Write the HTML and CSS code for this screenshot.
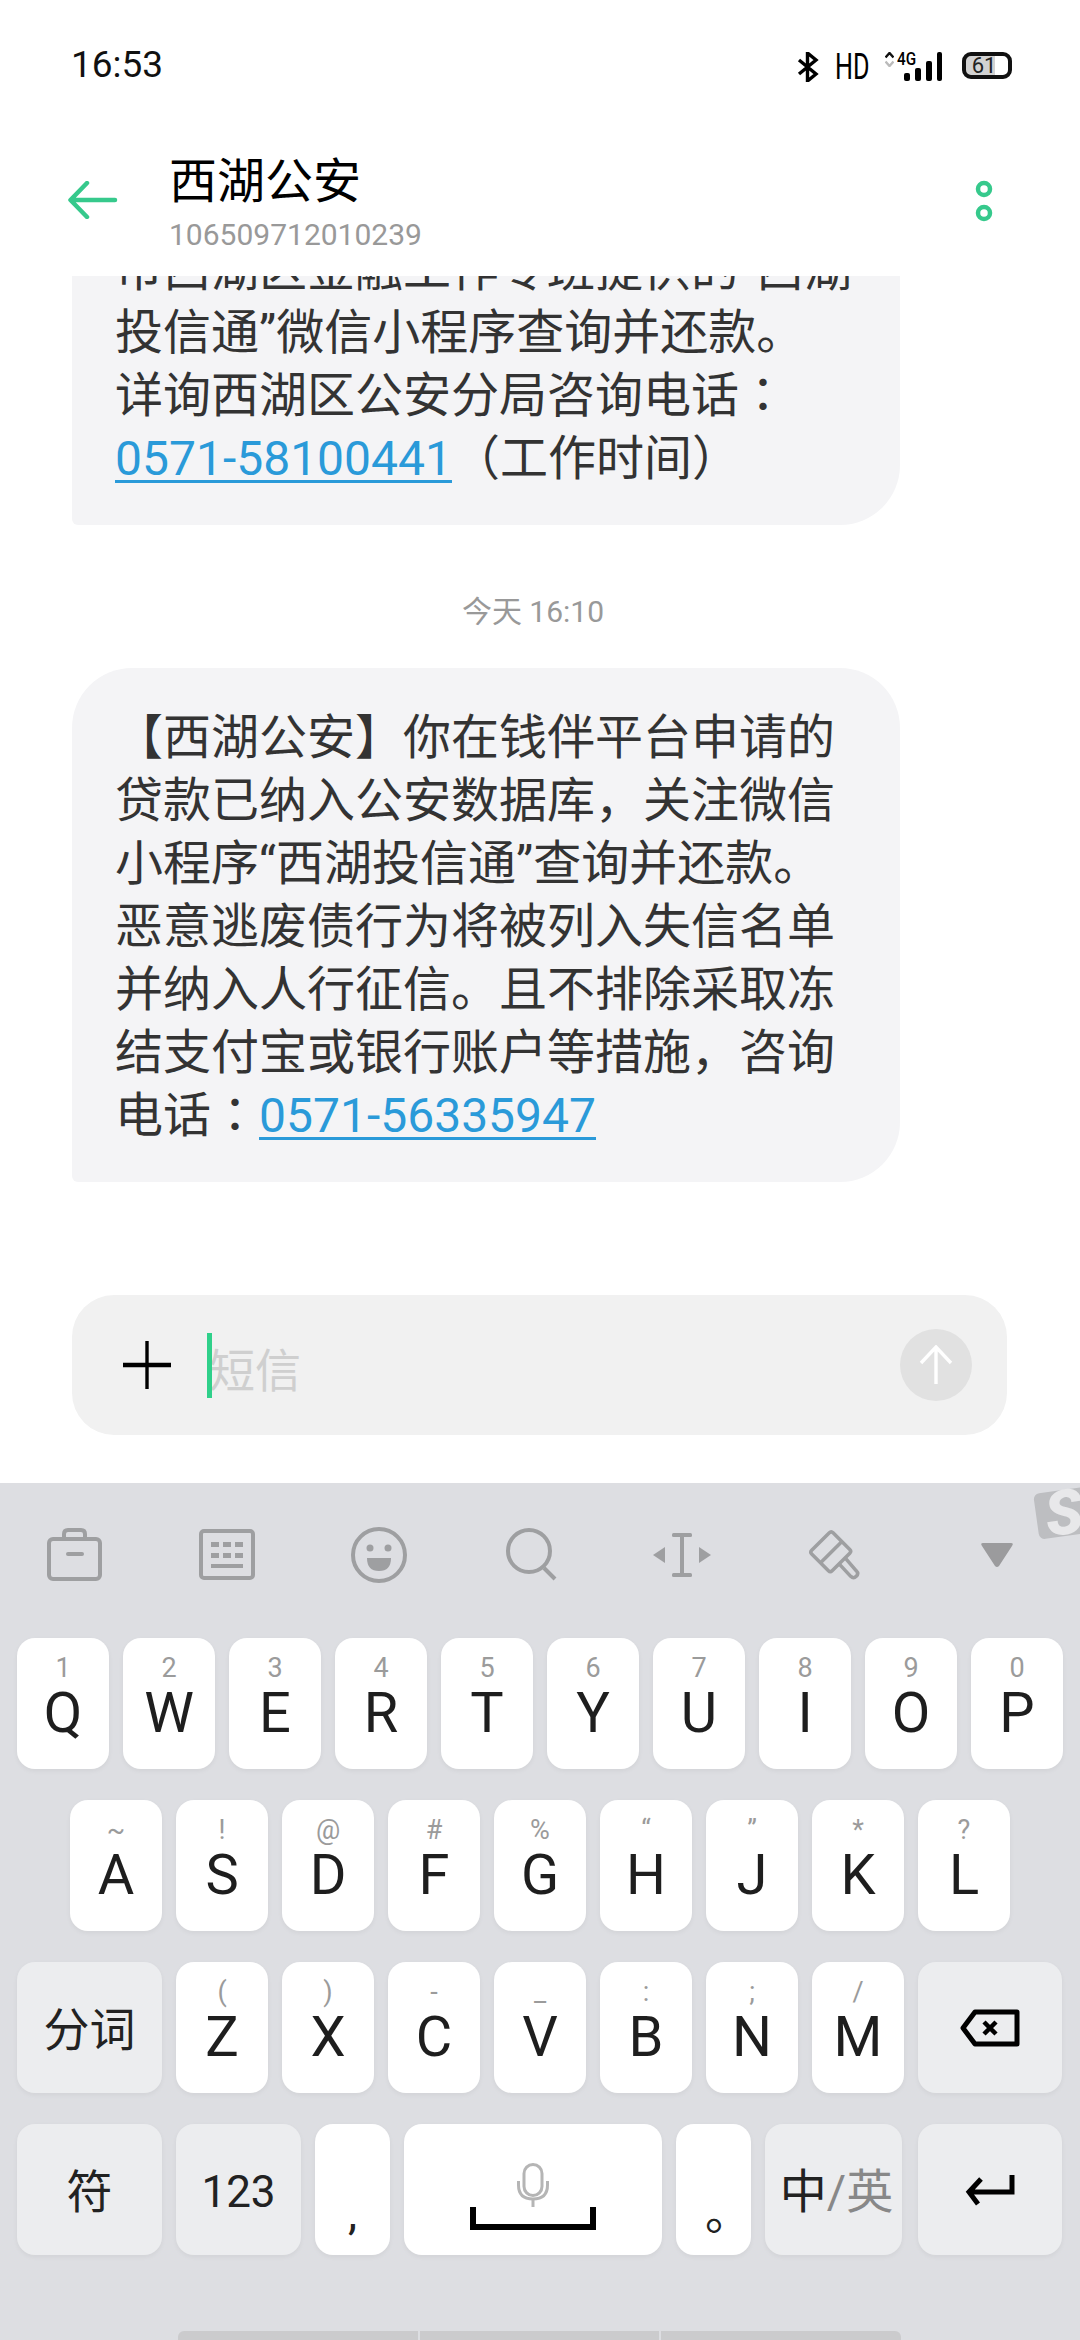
FILE: index.html
```html
<!DOCTYPE html>
<html lang="zh">
<head>
<meta charset="utf-8">
<title>西湖公安</title>
<link rel="stylesheet" href="styles.css">
</head>
<body>
<div class="page">
  <div class="status">
    <span class="time">16:53</span>
    <div class="status-right">
      <svg class="bt" width="22" height="30" viewBox="0 0 22 30"><path d="M2 8 L19 22 L10.500 29 V1 L19 8 L2 22" fill="none" stroke="#000" stroke-width="3.400"/></svg>
      <span class="hd">HD</span>
      <div class="net">
        <svg class="updown" width="9" height="15" viewBox="0 0 9 15"><path d="M0.500 5.500 L4.500 1 L8.500 5.500" fill="none" stroke="#111" stroke-width="2.400"/><path d="M0.500 9.500 L4.500 14 L8.500 9.500" fill="none" stroke="#bbb" stroke-width="2.400"/></svg>
        <span class="fourg">4G</span>
      </div>
      <svg class="signal" width="38" height="29" viewBox="0 0 38 29"><rect x="0" y="21" width="6" height="8" rx="2"/><rect x="11" y="16" width="6" height="13" rx="2"/><rect x="22" y="9" width="6" height="20" rx="2"/><rect x="33" y="0" width="5" height="29" rx="2"/></svg>
      <div class="batt"><span>61</span></div>
    </div>
  </div>

  <header class="head">
    <svg class="back" width="50" height="38" viewBox="0 0 50 38"><path d="M47 19 H4 M19 2 L2.500 19 L19 36" fill="none" stroke="#36c98c" stroke-width="4.500" stroke-linecap="round" stroke-linejoin="round"/></svg>
    <div class="who">
      <div class="name">西湖公安</div>
      <div class="number">106509712010239</div>
    </div>
    <svg class="more" width="18" height="42" viewBox="0 0 18 42"><circle cx="9" cy="9" r="6" fill="none" stroke="#36c98c" stroke-width="4.500"/><circle cx="9" cy="33" r="6" fill="none" stroke="#36c98c" stroke-width="4.500"/></svg>
  </header>

  <main class="thread">
    <div class="bubble bubble-old">市西湖区金融工作专班提供的“西湖<br>投信通”微信小程序查询并还款。<br>详询西湖区公安分局咨询电话<span class="tc" lang="zh-Hant">：</span><br><a class="link">0571-58100441</a>（工作时间）</div>
    <div class="stamp">今天 16:10</div>
    <div class="bubble">【西湖公安】你在钱伴平台申请的<br>贷款已纳入公安数据库，关注微信<br>小程序“西湖投信通”查询并还款。<br>恶意逃废债行为将被列入失信名单<br>并纳入人行征信。且不排除采取冻<br>结支付宝或银行账户等措施，咨询<br>电话<span class="tc" lang="zh-Hant">：</span><a class="link">0571-56335947</a></div>
  </main>

  <div class="composer">
    <svg class="plus" width="48" height="48" viewBox="0 0 48 48"><path d="M24 0 V48" stroke="#000" stroke-width="3.400"/><path d="M0 24 H48" stroke="#000" stroke-width="4.500"/></svg>
    <span class="caret"></span>
    <span class="placeholder">短信</span>
    <div class="send"><svg width="34" height="40" viewBox="0 0 34 40"><path d="M17 39 V3 M2 18 L17 2 L32 18" fill="none" stroke="#fff" stroke-width="3.400"/></svg></div>
  </div>

  <section class="kbd">
    <div class="logo"><span>S</span></div>
    <div class="tools">
      <svg width="56" height="56" viewBox="0 0 56 56"><g fill="none" stroke="#9e9fa1" stroke-width="4"><rect x="2" y="12" width="51" height="40" rx="4"/><path d="M17 12 V7 Q17 3 21 3 H34 Q38 3 38 7 V12"/></g><rect x="19" y="25" width="18" height="4" rx="2" fill="#9e9fa1"/></svg>
      <svg width="56" height="56" viewBox="0 0 56 56"><rect x="2" y="4" width="52" height="47" rx="3" fill="none" stroke="#9e9fa1" stroke-width="4"/><g fill="#9e9fa1"><rect x="12" y="15" width="8" height="5"/><rect x="24" y="15" width="8" height="5"/><rect x="36" y="15" width="8" height="5"/><rect x="12" y="26" width="8" height="5"/><rect x="24" y="26" width="8" height="5"/><rect x="36" y="26" width="8" height="5"/><rect x="12" y="37" width="32" height="4"/></g></svg>
      <svg width="56" height="56" viewBox="0 0 56 56"><circle cx="28" cy="28" r="26" fill="none" stroke="#9e9fa1" stroke-width="4"/><circle cx="19" cy="21" r="3.500" fill="#9e9fa1"/><circle cx="37" cy="21" r="3.500" fill="#9e9fa1"/><path d="M16 31 H40 Q40 44 28 44 Q16 44 16 31 Z" fill="#9e9fa1"/></svg>
      <svg width="56" height="56" viewBox="-2 0 56 56"><circle cx="24" cy="24" r="21" fill="none" stroke="#9e9fa1" stroke-width="4"/><path d="M39 41 L50 52" stroke="#9e9fa1" stroke-width="4"/></svg>
      <svg class="ti-cursor" width="60" height="56" viewBox="0 0 60 56"><g fill="#9e9fa1"><rect x="20" y="6" width="20" height="4" rx="1.500"/><rect x="20" y="46" width="20" height="4" rx="1.500"/><rect x="28" y="8" width="4" height="40"/><path d="M13 20 V36 L1 28 Z"/><path d="M47 20 V36 L59 28 Z"/></g></svg>
      <svg width="52" height="56" viewBox="0 0 56 56"><g fill="none" stroke="#9e9fa1" stroke-width="3.800" stroke-linejoin="round"><path d="M27 4 L45 22 Q47 24 45 26 L26 45 Q24 47 22 45 L4 27 Q2 25 4 23 L23 4 Q25 2 27 4 Z"/><path d="M36 14 L13 37"/><path d="M33 37 L46 51 Q49 54 52 51 Q55 48 52 45 L40 31"/></g></svg>
      <svg class="tri" width="34" height="26" viewBox="0 0 34 26"><path d="M3 1 H31 Q34 1 32 4 L19 24 Q17 26 15 24 L2 4 Q0 1 3 1 Z" fill="#9b9b9d"/></svg>
    </div>

    <div class="row row-top">
      <div class="key"><span class="hint">1</span><span class="ch">Q</span></div>
      <div class="key"><span class="hint">2</span><span class="ch">W</span></div>
      <div class="key"><span class="hint">3</span><span class="ch">E</span></div>
      <div class="key"><span class="hint">4</span><span class="ch">R</span></div>
      <div class="key"><span class="hint">5</span><span class="ch">T</span></div>
      <div class="key"><span class="hint">6</span><span class="ch">Y</span></div>
      <div class="key"><span class="hint">7</span><span class="ch">U</span></div>
      <div class="key"><span class="hint">8</span><span class="ch">I</span></div>
      <div class="key"><span class="hint">9</span><span class="ch">O</span></div>
      <div class="key"><span class="hint">0</span><span class="ch">P</span></div>
    </div>
    <div class="row row-mid">
      <div class="key"><span class="hint">~</span><span class="ch">A</span></div>
      <div class="key"><span class="hint">!</span><span class="ch">S</span></div>
      <div class="key"><span class="hint">@</span><span class="ch">D</span></div>
      <div class="key"><span class="hint">#</span><span class="ch">F</span></div>
      <div class="key"><span class="hint">%</span><span class="ch">G</span></div>
      <div class="key"><span class="hint">“</span><span class="ch">H</span></div>
      <div class="key"><span class="hint">”</span><span class="ch">J</span></div>
      <div class="key"><span class="hint">*</span><span class="ch">K</span></div>
      <div class="key"><span class="hint">?</span><span class="ch">L</span></div>
    </div>
    <div class="row row-low">
      <div class="key fn w145"><span class="word">分词</span></div>
      <div class="key"><span class="hint">(</span><span class="ch">Z</span></div>
      <div class="key"><span class="hint">)</span><span class="ch">X</span></div>
      <div class="key"><span class="hint">-</span><span class="ch">C</span></div>
      <div class="key"><span class="hint">_</span><span class="ch">V</span></div>
      <div class="key"><span class="hint">:</span><span class="ch">B</span></div>
      <div class="key"><span class="hint">;</span><span class="ch">N</span></div>
      <div class="key"><span class="hint">/</span><span class="ch">M</span></div>
      <div class="key fn w144 icon-key">
        <svg width="60" height="38" viewBox="0 0 60 38"><path d="M15 3 H57 V35 H15 L3 19 Z" fill="none" stroke="#000" stroke-width="5" stroke-linejoin="round"/><path d="M24 13 L36 25 M36 13 L24 25" stroke="#000" stroke-width="4.500"/></svg>
      </div>
    </div>
    <div class="row row-low">
      <div class="key fn w145"><span class="word">符</span></div>
      <div class="key fn w125"><span class="word num">123</span></div>
      <div class="key w75 comma"><span>,</span></div>
      <div class="key w258 space">
        <svg width="32" height="44" viewBox="0 0 32 44"><g fill="none" stroke="#b5b5b5" stroke-width="3"><rect x="7" y="1.500" width="18" height="31" rx="9"/><path d="M1.500 18 V22 Q1.500 36 16 36 Q30.500 36 30.500 22 V18"/><path d="M16 36 V44"/></g></svg>
        <svg width="126" height="23" viewBox="0 0 126 23"><path d="M3 0 V20 H123 V0" fill="none" stroke="#000" stroke-width="6"/></svg>
      </div>
      <div class="key w75 stop"><span>。</span></div>
      <div class="key fn w137"><span class="word lang">中<i class="dim">/英</i></span></div>
      <div class="key fn w144 icon-key enter">
        <svg width="50" height="32" viewBox="0 0 50 32"><path d="M47 1 V18 H5 M16 5 L4 18 L13 30" fill="none" stroke="#000" stroke-width="5"/></svg>
      </div>
    </div>
    <div class="homebar"><span></span><span></span><span></span></div>
  </section>
</div>
</body>
</html>
```

FILE: styles.css
```css
* { box-sizing: border-box; }
html, body { margin: 0; padding: 0; background: #fff; }
body { font-family: Roboto, "Noto Sans CJK SC", sans-serif; color: #000; }
.page { width: 1080px; height: 2340px; display: flex; flex-direction: column; overflow: hidden; }

/* status bar */
.status { height: 100px; flex: none; display: flex; justify-content: space-between; align-items: flex-start; padding: 44px 68px 0 71px; }
.time { font-size: 37px; line-height: 42px; color: #111; }
.status-right { display: flex; align-items: flex-start; margin-top: 8px; }
.bt { display: block; }
.hd { font-size: 36px; line-height: 30px; width: 37px; margin-left: 16px; transform: scaleX(.7); transform-origin: left center; color: #000; white-space: nowrap; }
.net { display: flex; align-items: flex-start; margin-left: 13px; width: 36px; gap: 3px; }
.updown { display: block; }
.fourg { font-size: 18px; line-height: 14px; font-weight: 500; transform: scaleX(.85); transform-origin: left center; }
.signal { display: block; margin-left: -17px; fill: #000; }
.batt { width: 50px; height: 27px; margin-left: 20px; border: 4px solid #111; border-radius: 9px; display: flex; align-items: center; justify-content: center; font-size: 22px; color: #222; background: linear-gradient(to right, #d2d2d2 68%, transparent 68%); padding-right: 6px; }

/* header */
.head { height: 176px; flex: none; display: flex; align-items: center; padding: 53px 87px 24px 68px; }
.back { display: block; margin-bottom: 5px; flex: none; }
.who { margin-left: 51px; flex: 1; }
.name { font-size: 48px; line-height: 58px; }
.number { font-size: 30px; line-height: 36px; margin-top: 6px; color: #999; }
.more { display: block; margin-bottom: 3px; flex: none; }

/* thread */
.thread { flex: 1; min-height: 0; overflow: hidden; display: flex; flex-direction: column; justify-content: flex-end; padding: 0 180px 113px 72px; }
.bubble { flex: none; background: #f4f4f6; color: #333; font-size: 48px; line-height: 63px; padding: 38px 0 35px 43px; white-space: nowrap; border-radius: 60px 60px 60px 6px; }
.bubble-old { padding-top: 60px; }
.link { color: #2a9ad9; text-decoration: underline; text-decoration-thickness: 3px; text-underline-offset: 5px; }
.tc { font-family: "Noto Sans CJK TC", sans-serif; line-height: 0; }
.stamp { flex: none; text-align: center; font-size: 30px; line-height: 36px; color: #999; padding: 69px 0 38px; margin-left: 94px; }

/* composer */
.composer { flex: none; height: 140px; margin: 0 73px 48px 72px; background: #f1f1f1; border-radius: 42px; display: flex; align-items: center; padding: 0 35px 0 51px; }
.plus { display: block; flex: none; }
.caret { width: 5px; height: 65px; margin-left: 36px; background: #2fd08a; flex: none; position: relative; z-index: 1; }
.placeholder { font-size: 46px; line-height: 50px; color: #cfcfcf; margin-left: -3px; margin-top: 11px; }
.send { width: 72px; height: 72px; margin-left: auto; border-radius: 50%; background: #e1e1e1; display: flex; align-items: center; justify-content: center; }
.send svg { display: block; }

/* keyboard */
.kbd { flex: none; height: 857px; background: #dddee2; position: relative; overflow: hidden; }
.logo { position: absolute; left: 1036px; top: 6px; width: 70px; height: 46px; background: #bdbec1; border-radius: 6px; transform: rotate(-8deg); display: flex; align-items: center; padding-left: 9px; }
.logo span { font-size: 62px; line-height: 46px; font-weight: 900; font-style: italic; color: #e8e8ea; }
.tools { height: 144px; margin-bottom: 11px; display: flex; align-items: center; padding-left: 47px; gap: 96px; }
.tools svg { display: block; flex: none; }
.tools .ti-cursor { margin-left: -3px; }
.tools .tri { margin-left: 24px; }

.row { display: flex; gap: 14px; margin-bottom: 31px; }
.row-top, .row-low { padding-left: 17px; }
.row-mid { padding-left: 70px; }
.key { width: 92px; height: 131px; flex: none; background: #fff; border-radius: 18px; box-shadow: 0 2px 5px rgba(0,0,0,.05); display: flex; flex-direction: column; align-items: center; padding-top: 17px; }
.hint { font-size: 27px; line-height: 27px; height: 27px; color: #9b9b9b; }
.ch { font-size: 56px; line-height: 56px; margin-top: 3px; color: #1e1e1e; }
.fn { background: #ecedef; padding-top: 4px; justify-content: center; }
.icon-key { padding-top: 0; }
.w145 { width: 145px; }
.w144 { width: 144px; }
.w125 { width: 125px; }
.w75 { width: 75px; }
.w258 { width: 258px; }
.w137 { width: 137px; }
.enter { margin-left: 2px; }
.word { font-size: 46px; line-height: 56px; color: #222; white-space: nowrap; }
.num { font-size: 44px; }
.lang { font-size: 47px; margin-left: 6px; }
.dim { font-style: normal; color: #888; }
.comma { font-size: 46px; line-height: 50px; color: #222; padding-top: 64px; }
.stop { font-size: 46px; line-height: 50px; color: #222; padding-top: 64px; padding-left: 29px; align-items: flex-start; }
.space { padding-top: 39px; }
.space svg { display: block; }
.homebar { position: absolute; left: 178px; bottom: 0; width: 723px; height: 9px; display: flex; gap: 2px; }
.homebar span { flex: 1; background: #cbcbcd; }
.homebar span:first-child { border-radius: 6px 0 0 0; }
.homebar span:last-child { border-radius: 0 6px 0 0; }
```
